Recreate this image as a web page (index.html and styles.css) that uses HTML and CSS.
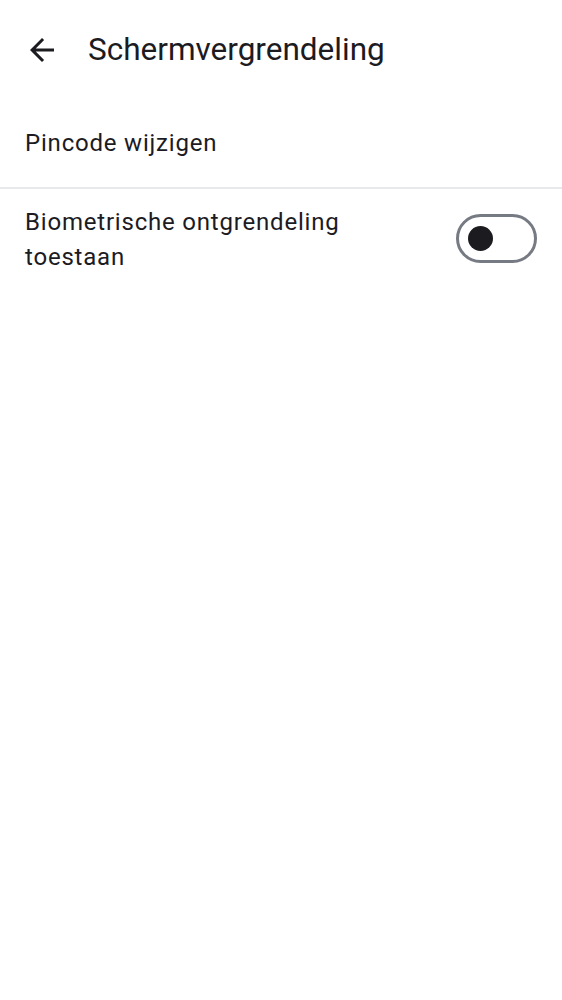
FILE: index.html
```html
<!DOCTYPE html>
<html lang="nl">
<head>
<meta charset="utf-8">
<link rel="stylesheet" href="styles.css">
</head>
<body>
<header class="appbar">
  <button class="back" aria-label="Terug">
    <svg viewBox="0 0 24 24" width="36" height="36"><path d="M20 11H7.83l5.59-5.59L12 4l-8 8 8 8 1.41-1.41L7.83 13H20v-2z" fill="#1c1b1f"/></svg>
  </button>
  <h1 class="title">Schermvergrendeling</h1>
</header>
<main>
  <div class="item item-single">Pincode wijzigen</div>
  <div class="divider"></div>
  <div class="item item-toggle">
    <span class="label">Biometrische ontgrendeling toestaan</span>
    <span class="switch"><span class="thumb"></span></span>
  </div>
</main>
</body>
</html>
```
FILE: styles.css
```css
html, body { margin: 0; padding: 0; background: #fff; }
body { font-family: Roboto, "Noto Sans", sans-serif; color: #1c1b1f; width: 562px; }
.appbar { display: flex; align-items: center; height: 99px; padding: 0 0 0 24px; box-sizing: border-box; }
.back { border: 0; background: none; padding: 0; width: 36px; height: 36px; display: flex; }
.title { margin: 0 0 0 28px; font-size: 31.5px; font-weight: 400; letter-spacing: 0; }
.item { font-size: 24px; letter-spacing: 0.8px; padding: 0 25px; }
.item-single { height: 88px; display: flex; align-items: center; }
.divider { height: 2px; background: #e7e9ec; }
.item-toggle { display: flex; align-items: center; justify-content: space-between; padding: 16px 25px 14px 25px; }
.label { width: 340px; line-height: 35px; }
.switch { width: 81px; height: 49px; box-sizing: border-box; border: 3px solid #767a82; border-radius: 25px; display: flex; align-items: center; padding-left: 9px; margin-bottom: 4px; }
.thumb { width: 25px; height: 25px; border-radius: 50%; background: #1c1b1f; }
```
